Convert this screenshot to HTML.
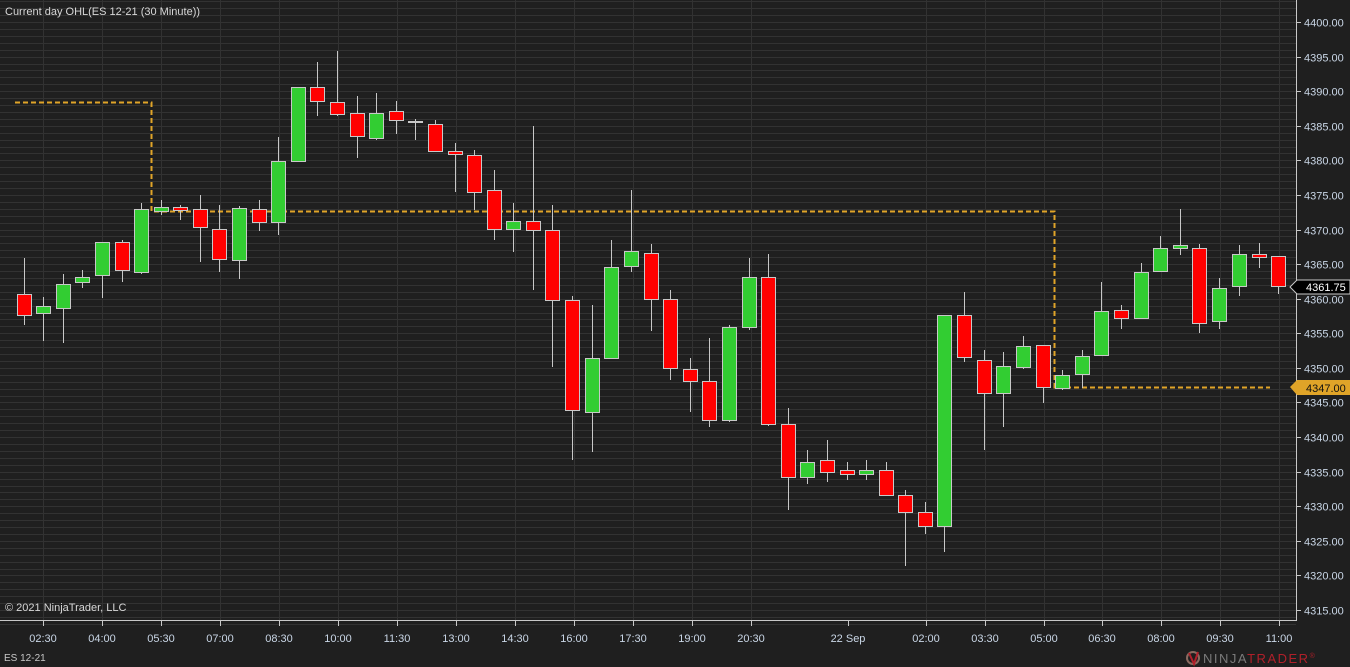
<!DOCTYPE html>
<html><head><meta charset="utf-8"><style>
html,body{margin:0;padding:0;background:#1f1f1f;overflow:hidden}
svg{display:block;font-family:"Liberation Sans",Arial,sans-serif}
</style></head><body>
<svg id="s" width="1350" height="667" viewBox="0 0 1350 667">
<rect width="1350" height="667" fill="#1f1f1f"/>
<g id="grid"></g>
<polyline points="15,102.5 151.5,102.5 151.5,211.5 1054.5,211.5 1054.5,387.5 1270,387.5" fill="none" stroke="#e0a428" stroke-width="2" stroke-dasharray="5,3"/>
<g id="c"></g>
<line x1="1296.5" y1="0" x2="1296.5" y2="621" stroke="#c8c8c8"/>
<line x1="0" y1="620.5" x2="1297" y2="620.5" stroke="#c8c8c8"/>
<g id="ax" fill="#c9d6e6" font-size="11"></g>
<text x="5" y="15" fill="#d8d8d8" font-size="11">Current day OHL(ES 12-21 (30 Minute))</text>
<text x="5" y="611" fill="#d8d8d8" font-size="11">© 2021 NinjaTrader, LLC</text>
<text x="4" y="661" fill="#c8c8c8" font-size="10">ES 12-21</text>
<polygon points="1290,287 1297,280 1350,280 1350,294 1297,294" fill="#000" stroke="#c8c8c8"/>
<text x="1306" y="291" fill="#fff" font-size="11">4361.75</text>
<polygon points="1290,387 1297,380 1350,380 1350,395 1297,395" fill="#e0a428"/>
<text x="1306" y="392" fill="#111" font-size="11">4347.00</text>
<circle cx="1193" cy="658" r="6" fill="none" stroke="#8a6a60" stroke-width="2"/>
<path d="M1189 653 L1194 664 L1198 652" fill="none" stroke="#b0202a" stroke-width="2"/>
<text x="1203" y="663" font-size="13" letter-spacing="1.5"><tspan fill="#7a7a7a">NINJA</tspan><tspan fill="#b0202a">TRADER</tspan><tspan fill="#b0202a" font-size="7" dy="-5">®</tspan></text>
</svg>
<script>
var N='http://www.w3.org/2000/svg';
function el(p,t,a,txt){var e=document.createElementNS(N,t);for(var k in a)e.setAttribute(k,a[k]);if(txt)e.textContent=txt;p.appendChild(e);return e;}
var g=document.getElementById('grid'),ax=document.getElementById('ax'),c=document.getElementById('c');
function Y(p){return 22+(4400-p)*6.918;}
for(var p=4403;p>=4313;p--){var y=Math.round(Y(p))+0.5;el(g,'line',{x1:0,x2:1296,y1:y,y2:y,stroke:'#323232'});}
for(var p=4400;p>=4315;p-=5){var y=Math.round(Y(p))+0.5;el(ax,'line',{x1:1296,x2:1301,y1:y,y2:y,stroke:'#c8c8c8'});el(ax,'text',{x:1304,y:y+4},p.toFixed(2));}
var T=[[43,'02:30'],[102,'04:00'],[161,'05:30'],[220,'07:00'],[279,'08:30'],[338,'10:00'],[397,'11:30'],[456,'13:00'],[515,'14:30'],[574,'16:00'],[633,'17:30'],[692,'19:00'],[751,'20:30'],[848,'22 Sep'],[926,'02:00'],[985,'03:30'],[1044,'05:00'],[1102,'06:30'],[1161,'08:00'],[1220,'09:30'],[1279,'11:00']];
T.forEach(function(t){var x=t[0]+0.5;if(t[1]!='22 Sep')el(g,'line',{x1:x,x2:x,y1:0,y2:620,stroke:'#323232'});el(ax,'line',{x1:x,x2:x,y1:620,y2:626,stroke:'#c8c8c8'});el(ax,'text',{x:t[0],y:642,'text-anchor':'middle'},t[1]);});
var C=[[24,'r',294,315,258,325],[43,'g',306,313,297,341],[63,'g',284,308,274,343],[82,'g',277,282,270,288],[102,'g',242,275,242,298],[122,'r',242,270,240,282],[141,'g',209,272,203,274],[161,'g',207,211,200,215],[180,'r',207,210,205,220],[200,'r',209,227,195,262],[219,'r',229,259,205,272],[239,'g',208,260,206,279],[259,'r',209,222,200,231],[278,'g',161,222,137,235],[298,'g',87,161,87,161],[317,'r',87,101,62,116],[337,'r',102,114,51,116],[357,'r',113,136,96,158],[376,'g',113,138,93,140],[396,'r',111,120,101,134],[415,'f',121,121,119,140],[435,'r',124,151,120,152],[455,'r',151,154,143,192],[474,'r',155,192,150,210],[494,'r',190,229,170,240],[513,'g',221,229,203,252],[533,'r',221,230,126,290],[552,'r',230,300,205,367],[572,'r',300,410,296,460],[592,'g',358,412,305,452],[611,'g',267,358,240,358],[631,'g',251,266,190,272],[651,'r',253,299,244,331],[670,'r',299,368,290,380],[690,'r',369,381,358,412],[709,'r',381,420,338,427],[729,'g',327,420,325,422],[749,'g',277,327,258,330],[768,'r',277,424,254,426],[788,'r',424,477,408,510],[807,'g',462,477,450,484],[827,'r',460,472,440,482],[847,'r',470,474,462,480],[866,'g',470,474,460,480],[886,'r',470,495,462,496],[905,'r',495,512,490,566],[925,'r',512,526,502,534],[944,'g',315,526,315,552],[964,'r',315,357,292,362],[984,'r',360,393,350,450],[1003,'g',366,393,352,427],[1023,'g',346,367,336,369],[1043,'r',345,387,345,403],[1062,'g',375,388,370,390],[1082,'g',356,374,350,388],[1101,'g',311,355,282,355],[1121,'r',310,318,305,329],[1141,'g',272,318,263,318],[1160,'g',248,271,236,272],[1180,'g',245,248,209,255],[1199,'r',248,323,244,333],[1219,'g',288,321,278,329],[1239,'g',254,286,245,296],[1259,'r',254,257,243,268],[1278,'r',256,286,256,294]];
C.forEach(function(k){var x=k[0]+0.5;el(c,'line',{x1:x,x2:x,y1:k[4],y2:k[5],stroke:'#c8c8c8'});
var h=Math.max(k[3]-k[2],1);el(c,'rect',{x:k[0]-6.5,y:k[2]+0.5,width:14,height:h,fill:k[1]=='g'?'#32cd32':(k[1]=='r'?'#ff0000':'#c8c8c8'),stroke:'#c8c8c8'});});
</script>
</body></html>
